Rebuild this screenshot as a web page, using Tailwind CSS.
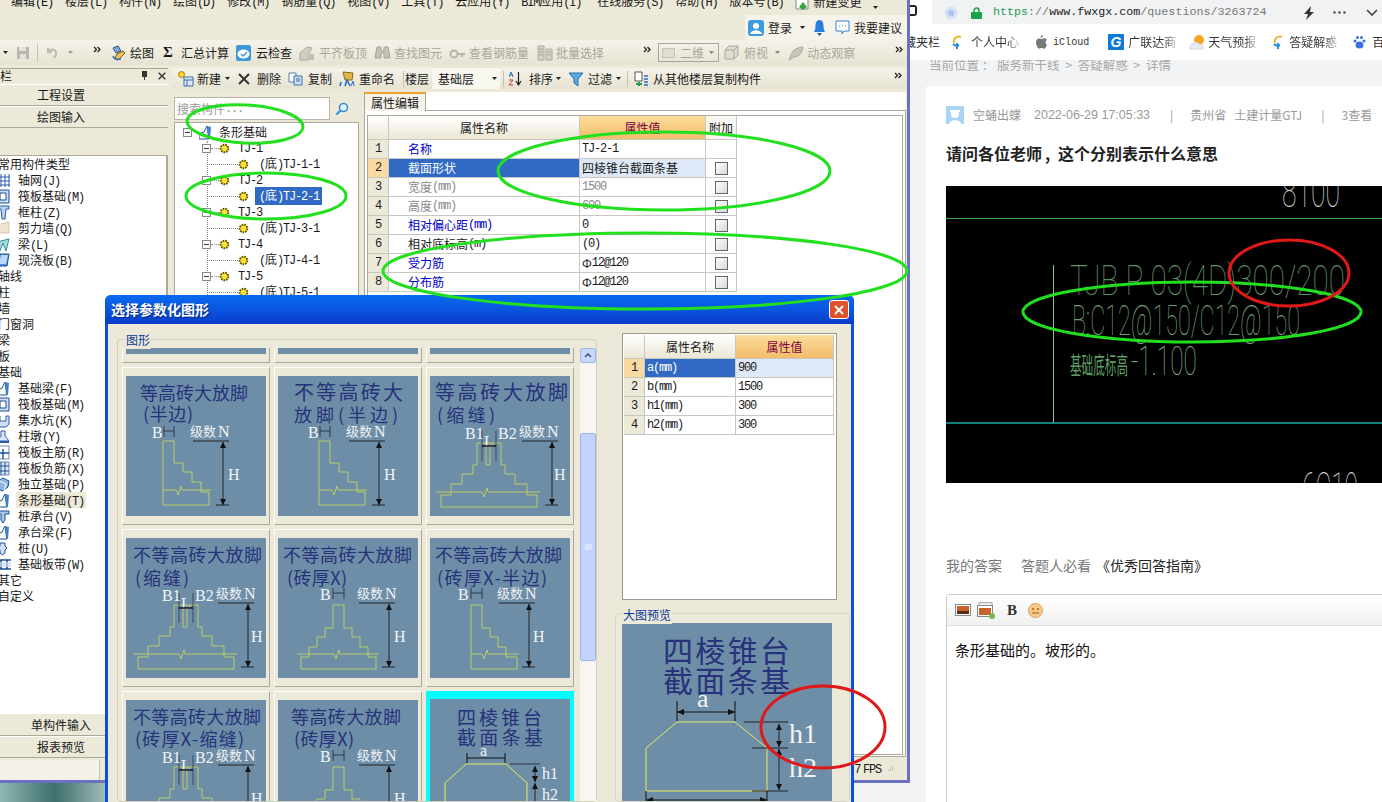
<!DOCTYPE html>
<html lang="zh">
<head>
<meta charset="UTF-8">
<title>GTJ</title>
<script src="https://cdn.jsdelivr.net/npm/@tailwindcss/browser@4"></script>
</head>
<body class="bg-[#f2f3f5]">

<!-- icon sheet -->
<svg class="hidden">
  <symbol id="more" viewBox="0 0 8 7"><path d="M1 1l2.5 2.5L1 6M4.5 1L7 3.5 4.5 6" fill="none" stroke="#222" stroke-width="1.3"/></symbol>
  <symbol id="down" viewBox="0 0 5 3"><path d="M0 0h5L2.5 3z" fill="#222"/></symbol>
  <symbol id="gear" viewBox="0 0 11 11"><circle cx="5.5" cy="5.5" r="3.8" fill="#ffe23a" stroke="#5c5200" stroke-width="2" stroke-dasharray="1.6 1"/></symbol>
  <symbol id="save" viewBox="0 0 14 14"><path d="M1 1h12v12H1z" fill="#b8b8b0"/><path d="M3 1h7v4H3zM4 8h6v5H4z" fill="#e4e2d8"/></symbol>
  <symbol id="undo" viewBox="0 0 12 12"><path d="M2 5c3-4 9-3 8 3l-2 3M2 1v4h4" fill="none" stroke="#bdbbb0" stroke-width="2"/></symbol>
  <symbol id="draw" viewBox="0 0 15 16"><path d="M2 3l5-2 3 5-5 2z" fill="#7fa6d8" stroke="#2d4f8a"/><path d="M6 9l6-3 2 2-7 7-3-2z" fill="#f2c14e" stroke="#7a5a10"/><path d="M2 11c1 3 4 4 8 3" fill="none" stroke="#2d6fc0" stroke-width="1.5"/></symbol>
  <symbol id="cloud" viewBox="0 0 15 16"><rect width="15" height="16" rx="2" fill="#3d97dc"/><ellipse cx="7.5" cy="9" rx="6" ry="4.5" fill="#fff"/><path d="M5 9l2 2 4-4" fill="none" stroke="#3d97dc" stroke-width="1.5"/></symbol>
  <symbol id="dis1" viewBox="0 0 16 16"><path d="M1 15V8l7-6 5 1-3 5v7z" fill="#d0cec2" stroke="#aaa89c"/><path d="M11 9h4v6h-4z" fill="#c0beb2"/></symbol>
  <symbol id="binoc" viewBox="0 0 17 16"><path d="M3 2h4v4h3V2h4l2 11h-6V8H7v5H1z" fill="#c4c2b6" stroke="#a6a498"/></symbol>
  <symbol id="dis2" viewBox="0 0 16 16"><circle cx="5" cy="9" r="3.5" fill="none" stroke="#b8b6aa" stroke-width="2"/><path d="M8 9h8M13 9v3" stroke="#b8b6aa" stroke-width="2"/></symbol>
  <symbol id="dis3" viewBox="0 0 16 16"><path d="M1 1h6v14H1zM9 4h6v11H9z" fill="#d4d2c6" stroke="#b0aea2"/><path d="M2 4h4M2 7h4M2 10h4M10 7h4M10 10h4" stroke="#a6a498"/></symbol>
  <symbol id="cube" viewBox="0 0 15 15"><path d="M1 5l4-4h9v9l-4 4H1zM1 5h9v9M10 5l4-4" fill="#dedcd0" stroke="#aaa89c"/></symbol>
  <symbol id="orbit" viewBox="0 0 16 16"><path d="M1 15l5-3c5 0 9-5 9-10C10 2 4 5 3 10z" fill="#c8c6ba" stroke="#aeac9f"/></symbol>
  <symbol id="newi" viewBox="0 0 16 16"><circle cx="3.5" cy="3.5" r="3" fill="#ffd23a" stroke="#a77f00"/><path d="M6 6h9v9H6z" fill="#dce8f8" stroke="#3a6ea5"/><path d="M6 9h9M9 9v6" stroke="#3a6ea5"/></symbol>
  <symbol id="cross" viewBox="0 0 12 12"><path d="M1 1l10 10M11 1L1 11" stroke="#333" stroke-width="2"/></symbol>
  <symbol id="copy" viewBox="0 0 15 14"><path d="M1 1h7v9H1z" fill="#fff" stroke="#5a7fb0"/><path d="M6 4h8v9H6z" fill="#cfe0f6" stroke="#3a6ea5"/><path d="M8 7h4M8 9h4" stroke="#3a6ea5"/></symbol>
  <symbol id="rename" viewBox="0 0 16 16"><path d="M4 1l10 1-1 7H6z" fill="#e3b64a" stroke="#8a6a1a"/><path d="M1 15l1-4M6 15l2-6 3 6" fill="none" stroke="#2d6fc0" stroke-width="1.6"/><path d="M12 15l2-5 1 5" fill="none" stroke="#2d6fc0"/></symbol>
  <symbol id="sort" viewBox="0 0 13 15"><path d="M0 6l2-5 2 5M1 4h3" fill="none" stroke="#2d6fc0"/><path d="M0 9h4l-4 5h4" fill="none" stroke="#c0392b"/><path d="M9.500 1v12M7 10l2.500 4 2.500-4" fill="none" stroke="#222" stroke-width="1.2"/></symbol>
  <symbol id="funnel" viewBox="0 0 14 14"><path d="M0 1h14L9 7v7l-4-3V7z" fill="#5aa8e0" stroke="#2d6fa8"/></symbol>
  <symbol id="floors" viewBox="0 0 16 16"><path d="M2 1h7v9H2z" fill="#fff" stroke="#555"/><path d="M11 5h4M11 8h4M11 11h4M11 14h4" stroke="#2d6fc0" stroke-width="1.5"/><path d="M3 13h6M6 11v4" stroke="#2a9a4a" stroke-width="2"/></symbol>
  <symbol id="user" viewBox="0 0 16 16"><rect width="16" height="16" rx="3" fill="#3a9be0"/><circle cx="8" cy="6" r="3" fill="#fff"/><path d="M2 14c1-5 11-5 12 0z" fill="#fff"/></symbol>
  <symbol id="bell" viewBox="0 0 11 16"><path d="M5.500 0c3 0 4 3 4 6s1 5 1.500 6H0c.5-1 1.500-3 1.500-6s1-6 4-6z" fill="#2a7de0"/><path d="M3 13h5l-2.500 3z" fill="#1a5ab0"/></symbol>
  <symbol id="chat" viewBox="0 0 15 16"><path d="M1 1h13v10H9l-2 3v-3H1z" fill="#fff" stroke="#3a7fd0"/><path d="M4 6h1M7 6h1M10 6h1" stroke="#3a7fd0"/></symbol>
  <symbol id="change" viewBox="0 0 15 15"><path d="M1 1h9l3 3v10H1z" fill="#fff" stroke="#7a8a9a"/><path d="M4 12l4-5 4 5-4 3z" fill="#3aa53a"/></symbol>
  <!-- left list -->
  <symbol id="l-grid" viewBox="0 0 15 15"><path d="M0 4h13M0 8h13M0 12h13M4 1v13M8 1v13M12 1v13" stroke="#2b5ea8"/></symbol>
  <symbol id="l-raft" viewBox="0 0 15 15"><path d="M0 1h12v13H0z" fill="#cfe0f6" stroke="#1d4f96"/><path d="M3 4h6v7H3z" fill="#fff" stroke="#1d4f96"/></symbol>
  <symbol id="l-col" viewBox="0 0 15 15"><path d="M0 1h12v3H9l-1 10H5L4 4H0z" fill="#b9d2ee" stroke="#2b5ea8"/></symbol>
  <symbol id="l-wall" viewBox="0 0 15 15"><path d="M0 4l12-3v11H0z" fill="#efe4d0" stroke="#b89a6a" stroke-dasharray="1 1"/></symbol>
  <symbol id="l-beam" viewBox="0 0 15 15"><path d="M0 5l12-3-3 12-3-8-3 8z" fill="#a8dcdc" stroke="#2f8a9a"/></symbol>
  <symbol id="l-slab" viewBox="0 0 15 15"><path d="M3 1h9l-2 12H0z" fill="#4a90d8" stroke="#1d4f96"/><path d="M4 2h7l-2 9H2z" fill="#bcd8f4"/></symbol>
  <symbol id="l-strip" viewBox="0 0 15 15"><path d="M0 14V9l5-2 3-6 2 13z" fill="#fff" stroke="#1d4f96"/><path d="M8 1l4 1-1 12h-2z" fill="#3f7fd0"/></symbol>
  <symbol id="l-pit" viewBox="0 0 15 15"><path d="M0 3h3v5h6V3h3v8l-3 3H2z" fill="#cfe0f6" stroke="#2b5ea8"/></symbol>
  <symbol id="l-pier" viewBox="0 0 15 15"><path d="M4 2h4v5l4 5H0l4-5z" fill="#dce8f6" stroke="#2b5ea8"/><path d="M0 13h12" stroke="#2b5ea8" stroke-width="2"/></symbol>
  <symbol id="l-rebar" viewBox="0 0 15 15"><path d="M0 1h12v13H0z" fill="#fff" stroke="#6a8cb8"/><path d="M0 8h12M6 4v10" stroke="#1d4f96" stroke-width="1.4"/></symbol>
  <symbol id="l-rebar2" viewBox="0 0 15 15"><path d="M0 1h12v13H0z" fill="#dce8f6" stroke="#6a8cb8"/><path d="M0 5h12M0 10h12M4 1v13M8 1v13" stroke="#1d4f96"/></symbol>
  <symbol id="l-iso" viewBox="0 0 15 15"><path d="M0 5l6-4 6 3-1 6-6 4-5-3z" fill="#8fb6e4" stroke="#1d4f96"/><path d="M3 4l6 3-2 6" fill="none" stroke="#fff"/></symbol>
  <symbol id="l-cap" viewBox="0 0 15 15"><path d="M0 2h12v3H8v6l-2 3-2-3V5H0z" fill="#a8c8ec" stroke="#1d4f96"/></symbol>
  <symbol id="l-pile" viewBox="0 0 15 15"><path d="M3 2h5v3l2 2-2 2v3l-2.500 2L3 12V9L1 7l2-2z" fill="#cfe0f6" stroke="#1d4f96"/></symbol>
  <symbol id="l-band" viewBox="0 0 15 15"><path d="M0 3h14M0 12h14M4 3v9M10 3v9" stroke="#1d4f96" stroke-width="1.6"/><path d="M0 5h14v5H0z" fill="#cfe0f6" opacity=".7"/></symbol>
</svg>

<div class="relative w-[1382px] h-[802px] overflow-hidden bg-[#f2f3f5] font-['Noto_Sans_CJK_SC',sans-serif] text-[12px] text-[#1a1a1a]">

  <!-- desktop wallpaper showing below the app window -->
  <div class="absolute left-0 top-[783px] w-[110px] h-[19px] bg-linear-to-r from-[#8fb8b4] via-[#3f6f6c] to-[#a8c4c0]"></div>

  <!-- GTJ app window -->
  <div id="app" class="absolute left-0 top-0 w-[910px] h-[783px] flex flex-col bg-[#ece9d8] border-r-[3px] border-b-[3px] border-[#6a72c0]">
    <!-- menu -->
    <div class="h-[14px] flex items-center overflow-hidden pl-[11px] gap-[12px] whitespace-nowrap">
      <span class="-mt-[10px]">编辑(E)</span><span class="-mt-[10px]">楼层(L)</span><span class="-mt-[10px]">构件(N)</span><span class="-mt-[10px]">绘图(D)</span><span class="-mt-[10px]">修改(M)</span><span class="-mt-[10px]">钢筋量(Q)</span><span class="-mt-[10px]">视图(V)</span><span class="-mt-[10px]">工具(T)</span><span class="-mt-[10px]">云应用(Y)</span><span class="-mt-[10px]">BIM应用(I)</span><span class="-mt-[10px] ml-[4px]">在线服务(S)</span><span class="-mt-[10px]">帮助(H)</span><span class="-mt-[10px]">版本号(B)</span>
      <svg class="w-[15px] h-[15px] -mt-[10px]"><use href="#change"/></svg>
      <span class="-mt-[10px] -ml-[9px]">新建变更</span>
      <svg class="w-[5px] h-[3px]"><use href="#down"/></svg>
    </div>
    <!-- login row -->
    <div class="h-[26px] flex justify-end">
      <div class="w-[162px] h-[25px] mt-px bg-[#f6f4ea] rounded-l-[3px] flex items-center">
        <svg class="w-[16px] h-[16px] ml-[3px]"><use href="#user"/></svg>
        <span class="ml-[4px]">登录</span>
        <svg class="w-[5px] h-[3px] ml-[8px]"><use href="#down"/></svg>
        <svg class="w-[11px] h-[16px] ml-[9px]"><use href="#bell"/></svg>
        <svg class="w-[15px] h-[16px] ml-[10px]"><use href="#chat"/></svg>
        <span class="ml-[4px]">我要建议</span>
      </div>
    </div>
    <!-- main toolbar -->
    <div class="h-[25px] flex items-center bg-linear-to-b from-[#f5f3e9] to-[#e6e3d2] whitespace-nowrap">
      <svg class="w-[5px] h-[3px] ml-[3px]"><use href="#down"/></svg>
      <svg class="w-[14px] h-[14px] ml-[8px]"><use href="#save"/></svg>
      <span class="w-px h-[18px] bg-[#c4c2b4] ml-[7px]"></span>
      <svg class="w-[12px] h-[12px] ml-[8px]"><use href="#undo"/></svg>
      <svg class="w-[5px] h-[3px] ml-[10px] opacity-40"><use href="#down"/></svg>
      <svg class="w-[8px] h-[7px] ml-[20px] -mt-[6px]"><use href="#more"/></svg>
      <svg class="w-[15px] h-[16px] ml-[10px]"><use href="#draw"/></svg>
      <span class="ml-[4px]">绘图</span>
      <span class="ml-[9px] w-[10px] text-[15px] font-bold leading-none font-['Liberation_Serif',serif]">Σ</span>
      <span class="ml-[8px]">汇总计算</span>
      <svg class="w-[15px] h-[16px] ml-[7px]"><use href="#cloud"/></svg>
      <span class="ml-[5px]">云检查</span>
      <svg class="w-[16px] h-[16px] ml-[7px]"><use href="#dis1"/></svg>
      <span class="ml-[4px] text-[#a8a69a]">平齐板顶</span>
      <svg class="w-[17px] h-[16px] ml-[7px]"><use href="#binoc"/></svg>
      <span class="ml-[3px] text-[#a8a69a]">查找图元</span>
      <svg class="w-[16px] h-[16px] ml-[7px]"><use href="#dis2"/></svg>
      <span class="ml-[4px] text-[#a8a69a]">查看钢筋量</span>
      <svg class="w-[16px] h-[16px] ml-[8px]"><use href="#dis3"/></svg>
      <span class="ml-[3px] text-[#a8a69a]">批量选择</span>
      <svg class="w-[8px] h-[7px] ml-[39px] -mt-[6px]"><use href="#more"/></svg>
      <div class="ml-[7px] w-[61px] h-[19px] border border-[#a8a69a] flex items-center text-[#a8a69a]">
        <span class="w-[13px] h-[10px] ml-[3px] border border-[#c4c2b4] bg-[#e0ded2]"></span>
        <span class="ml-[5px]">二维</span>
        <svg class="w-[5px] h-[3px] ml-[5px] opacity-50"><use href="#down"/></svg>
      </div>
      <svg class="w-[15px] h-[15px] ml-[5px]"><use href="#cube"/></svg>
      <span class="ml-[5px] text-[#a8a69a]">俯视</span>
      <svg class="w-[5px] h-[3px] ml-[7px] opacity-50"><use href="#down"/></svg>
      <svg class="w-[16px] h-[16px] ml-[8px]"><use href="#orbit"/></svg>
      <span class="ml-[3px] text-[#a8a69a]">动态观察</span>
      <svg class="w-[8px] h-[7px] ml-[40px] -mt-[6px]"><use href="#more"/></svg>
    </div>

    <div class="flex-1 flex pt-[3px] min-h-0">
      <!-- navigation column -->
      <div class="w-[168px] flex flex-col shrink-0">
        <div class="h-[14px] border-t border-[#aca899] flex items-center whitespace-nowrap">
          <span class="w-[141px] overflow-hidden">栏</span>
          <span class="w-[7px] h-[9px] flex flex-col items-center"><span class="w-[5px] h-[6px] bg-[#333]"></span><span class="w-px h-[3px] bg-[#333]"></span></span>
          <svg class="w-[8px] h-[8px] ml-[10px]"><use href="#cross"/></svg>
        </div>
        <div class="h-[22px] mt-[2px] flex items-center pl-[37px] border-t border-white border-b border-b-[#aca899] text-[12px]">工程设置</div>
        <div class="h-[22px] flex items-center pl-[37px] border-t border-white border-b border-b-[#aca899]">绘图输入</div>
        <div class="h-[27px]"></div>
        <div id="nav" class="flex-1 min-h-0 bg-white border-t border-r-2 border-[#aca899] overflow-hidden"></div>
        <div class="h-[23px] flex items-center pl-[31px] border-t border-white border-b border-b-[#aca899]">单构件输入</div>
        <div class="h-[22px] flex items-center pl-[37px] border-t border-white border-b border-b-[#aca899]">报表预览</div>
        <div class="h-[22px] flex items-end"><div class="w-[100px] h-[20px] bg-[#f4f2e8] border-r border-[#c4c2b4]"></div></div>
      </div>

      <!-- component area -->
      <div class="flex-1 ml-[4px] flex flex-col min-w-0">
        <div class="h-[21px] flex items-center whitespace-nowrap bg-linear-to-b from-[#f5f3e9] to-[#e6e3d2]">
          <svg class="w-[16px] h-[16px] ml-[6px]"><use href="#newi"/></svg>
          <span class="ml-[3px]">新建</span>
          <svg class="w-[5px] h-[3px] ml-[4px]"><use href="#down"/></svg>
          <svg class="w-[12px] h-[12px] ml-[8px]"><use href="#cross"/></svg>
          <span class="ml-[7px]">删除</span>
          <svg class="w-[15px] h-[14px] ml-[7px]"><use href="#copy"/></svg>
          <span class="ml-[5px]">复制</span>
          <svg class="w-[16px] h-[16px] ml-[7px]"><use href="#rename"/></svg>
          <span class="ml-[4px]">重命名</span>
          <span class="w-px h-[16px] bg-[#c4c2b4] ml-[8px]"></span>
          <span class="ml-[1px]">楼层</span>
          <div class="ml-[3px] w-[68px] h-[21px] bg-[#f8f7f0] flex items-center pl-[6px]"><span>基础层</span><svg class="w-[5px] h-[3px] ml-[18px]"><use href="#down"/></svg></div>
          <span class="w-px h-[16px] bg-[#c4c2b4] ml-[3px]"></span>
          <svg class="w-[13px] h-[15px] ml-[5px]"><use href="#sort"/></svg>
          <span class="ml-[7px]">排序</span>
          <svg class="w-[5px] h-[3px] ml-[3px]"><use href="#down"/></svg>
          <svg class="w-[14px] h-[14px] ml-[8px]"><use href="#funnel"/></svg>
          <span class="ml-[5px]">过滤</span>
          <svg class="w-[5px] h-[3px] ml-[4px]"><use href="#down"/></svg>
          <span class="w-px h-[16px] bg-[#c4c2b4] ml-[6px]"></span>
          <svg class="w-[16px] h-[16px] ml-[5px]"><use href="#floors"/></svg>
          <span class="ml-[4px]">从其他楼层复制构件</span>
          <svg class="w-[8px] h-[7px] ml-auto mr-[5px] -mt-[6px]"><use href="#more"/></svg>
        </div>
        <div class="flex-1 flex min-h-0">
          <!-- tree column -->
          <div class="w-[185px] ml-[2px] pt-[8px] flex flex-col shrink-0">
            <div class="h-[23px] flex">
              <div class="w-[156px] bg-white border border-[#b8b6a8] flex items-center pl-[2px] text-[#999]">搜索构件...</div>
              <div class="w-[24px] flex items-center justify-center"><svg class="w-[14px] h-[14px]" viewBox="0 0 14 14"><circle cx="8.500" cy="5.500" r="4" fill="#dff0fb" stroke="#3a8fd0" stroke-width="1.600"/><path d="M5.500 8.500L1.500 12.500" stroke="#3a8fd0" stroke-width="2.200"/></svg></div>
            </div>
            <div id="tree" class="relative flex-1 mt-[2px] bg-white border border-[#aca899] overflow-hidden"></div>
          </div>
          <!-- property editor -->
          <div class="flex-1 ml-[5px] flex flex-col min-w-0 mr-[1px]">
            <div class="h-[3px]"></div>
            <div class="h-[19px] flex bg-white">
              <div class="w-[62px] bg-[#f5f3e9] border-x border-[#aca899] border-t-2 border-t-[#f0a030] flex items-center justify-center">属性编辑</div>
              <div class="flex-1 border-b border-[#aca899]"></div>
            </div>
            <div class="h-[646px] bg-white border-x border-b border-[#aca899] pt-[4px] pl-[2px] pr-[2px]">
              <div id="props" class="border border-[#aca899] h-[640px]"></div>
            </div>
            <div class="flex-1 flex items-center justify-end pr-[12px] gap-[5px]">
              <span>7.7 FPS</span>
              <svg class="w-[8px] h-[8px]" viewBox="0 0 8 8"><path d="M6 1h1M4 3h1M6 3h1M2 5h1M4 5h1M6 5h1" stroke="#aca899"/></svg>
            </div>
          </div>
        </div>
      </div>
    </div>
  </div>

  <!-- dialog -->
  <div id="dialog" class="absolute left-[105px] top-[295px] w-[749px] h-[507px] flex flex-col bg-[#ece9d8] border-x-[3px] border-[#0a4fe0] rounded-t-[6px]">
    <div class="h-[29px] -mx-[3px] rounded-t-[6px] bg-linear-to-b from-[#0a6af0] via-[#0a55e0] to-[#0a3cc8] flex items-center pl-[6px] pr-[5px] shrink-0">
      <span class="text-white font-bold text-[14px] [text-shadow:1px_1px_1px_#0a2a80]">选择参数化图形</span>
      <div class="ml-auto w-[20px] h-[19px] rounded-[3px] bg-[#e0502a] border border-white flex items-center justify-center"><svg class="w-[10px] h-[10px]" viewBox="0 0 10 10"><path d="M1 1l8 8M9 1l-8 8" stroke="#fff" stroke-width="2"/></svg></div>
    </div>
    <div class="flex-1 flex min-h-0 pl-[9px]">
      <!-- shapes group -->
      <div class="relative w-[480px] mt-[15px] border border-[#d0cebc] rounded-[4px] pl-[4px] pt-[8px] overflow-visible">
        <span class="absolute left-[7px] -top-[9px] px-px bg-[#ece9d8] text-[#0a3a9a]">图形</span>
        <div class="flex h-full">
          <div class="w-[456px] h-full overflow-hidden">
            <div id="tiles" class="-mt-[143px] grid grid-cols-[148px_148px_148px] auto-rows-[158px] gap-x-[4px] gap-y-[4px]"></div>
          </div>
          <div class="w-[16px] ml-[2px] flex flex-col bg-[#f7f6f0]">
            <div class="h-[15px] bg-[#c8d8fa] border border-[#9db4e8] rounded-[2px] flex items-center justify-center"><svg class="w-[8px] h-[5px]" viewBox="0 0 8 5"><path d="M1 4l3-3 3 3" fill="none" stroke="#3a4f8a" stroke-width="1.500"/></svg></div>
            <div class="h-[70px]"></div>
            <div class="h-[228px] bg-[#c3d3fd] border border-[#9db4e8] rounded-[2px] flex items-center justify-center"><svg class="w-[7px] h-[7px]" viewBox="0 0 7 7"><path d="M0 1h7M0 3h7M0 5h7" stroke="#eef3ff"/></svg></div>
          </div>
        </div>
      </div>
      <!-- right side -->
      <div class="flex-1 flex flex-col pl-[25px] pr-[1px] min-w-0 min-h-0">
        <div id="params" class="mt-[9px] w-[215px] h-[267px] shrink-0 bg-white border border-[#9a9a90] p-px"></div>
        <div class="relative mt-[13px] -ml-[7px] flex-1 min-h-0 overflow-visible border border-[#d8d6c6] rounded-[4px] pl-[6px] pt-[9px]">
          <span class="absolute left-[6px] -top-[8px] px-px bg-[#ece9d8] text-[#0a3a9a]">大图预览</span>
          <div class="h-full overflow-hidden">
            <svg id="big" class="w-[210px] h-[200px]" viewBox="0 0 210 200" font-family="'Noto Sans CJK SC',sans-serif"></svg>
          </div>
        </div>
      </div>
    </div>
  </div>

  <!-- browser window -->
  <div class="absolute left-[910px] top-0 w-[472px] h-[802px] flex flex-col bg-[#f2f3f5]">
    <div class="h-[24px] bg-white flex shrink-0">
      <div class="w-[7px] h-[11px] mt-[5px] border-2 border-l-0 border-[#222] rounded-r-[3px]"></div>
      <div class="ml-[15px] flex-1 bg-[#f1f2f4] rounded-bl-[4px] flex items-center pt-[1px]">
        <svg class="w-[14px] h-[14px] ml-[12px]" viewBox="0 0 14 14"><circle cx="7" cy="7" r="6.500" fill="#d6e2f8"/><circle cx="7" cy="7" r="3" fill="#a9c2f0"/></svg>
        <svg class="w-[11px] h-[12px] ml-[13px]" viewBox="0 0 11 12"><path d="M3 5V3.500a2.500 2.500 0 015 0V5" fill="none" stroke="#1aa34a" stroke-width="1.500"/><rect y="5" width="11" height="7" rx="1" fill="#1aa34a"/></svg>
        <span class="ml-[11px] font-['Liberation_Mono',monospace] text-[11.7px] whitespace-nowrap text-[#777]"><span class="text-[#1f9a55]">https</span>://<span class="text-[#222]">www.fwxgx.com</span>/questions/3263724</span>
        <svg class="w-[12px] h-[14px] ml-[36px]" viewBox="0 0 12 14"><path d="M8 0L1 8h4l-2 6 8-8H7z" fill="#333"/></svg>
        <svg class="w-[13px] h-[3px] ml-[18px]" viewBox="0 0 13 3"><circle cx="1.500" cy="1.500" r="1.300" fill="#555"/><circle cx="6.500" cy="1.500" r="1.300" fill="#555"/><circle cx="11.500" cy="1.500" r="1.300" fill="#555"/></svg>
        <svg class="w-[12px] h-[7px] ml-[20px]" viewBox="0 0 12 7"><path d="M1 1l5 5 5-5" fill="none" stroke="#444" stroke-width="1.600"/></svg>
      </div>
    </div>
    <div class="relative z-10 h-[36px] bg-white flex items-center whitespace-nowrap overflow-hidden text-[12px] text-[#333] shrink-0 *:shrink-0">
      <span class="-ml-[6px] w-[36px]">藏夹栏</span>
      <svg class="w-[12px] h-[16px] ml-[11px]" viewBox="0 0 12 16"><path d="M10 3A5 5 0 003 9" fill="none" stroke="#f2b632" stroke-width="2"/><path d="M2 10a5 5 0 006 1M6 9v6" fill="none" stroke="#2a8fd8" stroke-width="2"/></svg>
      <span class="ml-[8px] w-[48px] bg-linear-to-r from-[#333] from-75% to-[#ccc] bg-clip-text text-transparent">个人中心</span>
      <svg class="w-[12px] h-[14px] ml-[16px]" viewBox="0 0 12 14"><path d="M8 0c0 2-1 3-2.500 3C5.500 1.500 7 0 8 0zM6 4c1 0 2-.8 3.500-.8 1 0 2 .6 2.500 1.500-2 1.200-1.700 4 .0 5-.7 2-2 4-3 4-.9 0-1.300-.6-2.300-.6s-1.500.6-2.300.6C3 13.700 1 10 1 7.500 1 5 2.600 3.500 4 3.500c.8 0 1.500.5 2 .5z" fill="#777"/></svg>
      <span class="ml-[6px] font-['Liberation_Mono',monospace] text-[10px] tracking-[0.05px] text-[#333]">iCloud</span>
      <svg class="w-[16px] h-[16px] ml-[19px]" viewBox="0 0 16 16"><rect width="16" height="16" rx="1" fill="#0d79d9"/><text x="2.500" y="13" font-size="14" font-weight="bold" font-style="italic" fill="#fff" font-family="'Liberation Sans',sans-serif">G</text></svg>
      <span class="ml-[4px] w-[48px] bg-linear-to-r from-[#333] from-75% to-[#ccc] bg-clip-text text-transparent">广联达商</span>
      <svg class="w-[16px] h-[16px] ml-[13px]" viewBox="0 0 16 16"><circle cx="10" cy="6" r="5" fill="#f6a623"/><path d="M1 15c-1-3 1-5 3-5 1-2 5-2 6 0 2 0 4 2 4 5z" fill="#e8edf2" stroke="#cfd6dc"/></svg>
      <span class="ml-[3px] w-[48px] bg-linear-to-r from-[#333] from-75% to-[#ccc] bg-clip-text text-transparent">天气预报</span>
      <svg class="w-[12px] h-[16px] ml-[16px]" viewBox="0 0 12 16"><path d="M10 3A5 5 0 003 9" fill="none" stroke="#f2b632" stroke-width="2"/><path d="M2 10a5 5 0 006 1M6 9v6" fill="none" stroke="#2a8fd8" stroke-width="2"/></svg>
      <span class="ml-[5px] w-[48px] bg-linear-to-r from-[#333] from-75% to-[#ccc] bg-clip-text text-transparent">答疑解惑</span>
      <svg class="w-[13px] h-[14px] ml-[16px]" viewBox="0 0 13 14"><ellipse cx="6.500" cy="10" rx="4" ry="3.500" fill="#3a6fe0"/><circle cx="2" cy="6" r="1.500" fill="#3a6fe0"/><circle cx="11" cy="6" r="1.500" fill="#3a6fe0"/><circle cx="4.500" cy="2.500" r="1.500" fill="#3a6fe0"/><circle cx="8.500" cy="2.500" r="1.500" fill="#3a6fe0"/></svg>
      <span class="ml-[6px]">百度</span>
    </div>
    <div class="flex-1 pl-[16px] min-h-0 overflow-hidden">
      <div class="h-[27px] -mt-[2px] mb-[1px] pl-[3px] text-[12.500px] leading-[14px] text-[#a8a8a8] whitespace-nowrap">当前位置 ： 服务新干线&nbsp; &gt; &nbsp;答疑解惑&nbsp; &gt; &nbsp;详情</div>
      <div class="bg-white h-[720px] pl-[20px] pt-[20px] overflow-hidden rounded-tl-[2px]">
        <div class="h-[18px] flex items-center text-[#999] whitespace-nowrap text-[12px]">
          <svg class="w-[18px] h-[18px]" viewBox="0 0 18 18"><rect width="18" height="18" fill="#a8d4f5"/><circle cx="9" cy="8" r="4" fill="#fff"/><path d="M3 18c0-5 12-5 12 0z" fill="#fff"/><path d="M4 4h10v2H4z" fill="#fff"/></svg>
          <span class="ml-[9px] w-[48px]">空蛹出蝶</span>
          <span class="ml-[13px] font-['Liberation_Sans',sans-serif] text-[12.500px]">2022-06-29 17:05:33</span>
          <span class="ml-[20px]">|</span>
          <span class="ml-[17px]">贵州省</span>
          <span class="ml-[8px]">土建计量GTJ</span>
          <span class="ml-[19px]">|</span>
          <span class="ml-[17px]">3查看</span>
        </div>
        <h1 class="mt-[17px] h-[24px] leading-[24px] text-[16px] font-bold text-[#222] whitespace-nowrap">请问各位老师<span class="inline-block w-[16px] pl-[3px]">,</span>这个分别表示什么意思</h1>
        <!-- CAD drawing -->
        <svg class="mt-[21px] w-[436px] h-[297px] bg-black" viewBox="946 186 436 297" font-family="Roboto,'Liberation Sans',sans-serif" font-weight="100">
          <path d="M946 218.500H1382" stroke="#38b050"/>
          <path d="M946 423H1382" stroke="#0f7f7f" stroke-width="2"/>
          <path d="M1053.500 265V423" stroke="#8fc09a"/>
          <text x="1282" y="207" font-size="44" textLength="58" lengthAdjust="spacingAndGlyphs" fill="#cfcfcf">8100</text>
          <text x="1070" y="295" font-size="42" textLength="275" lengthAdjust="spacingAndGlyphs" fill="#5f8f66">TJB P 03(4D)300/200</text>
          <text x="1072" y="335" font-size="42" textLength="228" lengthAdjust="spacingAndGlyphs" fill="#6f9f74">B:C12@150/C12@150</text>
          <text x="1070" y="374" font-size="24" textLength="58" lengthAdjust="spacingAndGlyphs" font-family="'Noto Sans CJK SC',sans-serif" font-weight="400" fill="#5f9f66">基础底标高</text>
          <text x="1131" y="375" font-size="40" textLength="66" lengthAdjust="spacingAndGlyphs" fill="#7fb088">-1.100</text>
          <text x="1302" y="504" font-size="44" textLength="56" lengthAdjust="spacingAndGlyphs" fill="#cfcfcf">6C10</text>
        </svg>
        <div class="mt-[72px] h-[20px] flex items-center text-[14px] text-[#777] whitespace-nowrap">
          <span>我的答案</span>
          <span class="ml-[19px]">答题人必看</span>
          <span class="ml-[5px] text-[#222]">《优秀回答指南》</span>
        </div>
        <div class="mt-[19px] w-[460px] h-[240px] border border-[#ccc] rounded-t-[3px]">
          <div class="h-[31px] bg-linear-to-b from-white to-[#f0f0f0] border-b border-[#ddd] flex items-center">
            <svg class="w-[16px] h-[12px] ml-[8px]" viewBox="0 0 16 12"><rect x=".5" y=".5" width="15" height="11" fill="#fff" stroke="#888"/><rect x="2" y="2" width="12" height="8" fill="#c8642a"/><path d="M2 7h12v3H2z" fill="#5a2a10"/></svg>
            <svg class="w-[18px] h-[17px] ml-[6px]" viewBox="0 0 18 17"><rect x="2" y=".5" width="13" height="9" fill="#eee" stroke="#aaa"/><rect x=".5" y="3.500" width="15" height="11" fill="#fff" stroke="#888"/><rect x="2" y="6" width="12" height="7" fill="#c8642a"/><circle cx="15" cy="14" r="3" fill="#7ab648"/></svg>
            <span class="ml-[12px] w-[14px] font-bold text-[15px] font-['Liberation_Serif',serif] text-[#333]">B</span>
            <svg class="w-[15px] h-[15px] ml-[7px]" viewBox="0 0 15 15"><circle cx="7.500" cy="7.500" r="7" fill="#f6c98a" stroke="#e0a050"/><circle cx="5" cy="6" r="1" fill="#a05a10"/><circle cx="10" cy="6" r="1" fill="#a05a10"/><path d="M4 10h7" stroke="#a05a10"/></svg>
          </div>
          <div class="pl-[8px] pt-[14px] text-[15px] leading-[20px] text-[#111]">条形基础的。坡形的。</div>
        </div>
      </div>
    </div>
  </div>

  <!-- hand drawn annotations -->
  <svg class="absolute inset-0 w-[1382px] h-[802px] pointer-events-none" viewBox="0 0 1382 802" fill="none" stroke-width="3">
    <ellipse cx="245" cy="124" rx="58" ry="19" stroke="#22e01e" transform="rotate(3 245 124)"/>
    <ellipse cx="266" cy="196" rx="80" ry="23" stroke="#22e01e"/>
    <ellipse cx="664" cy="171" rx="166" ry="39" stroke="#22e01e"/>
    <ellipse cx="645" cy="271" rx="262" ry="38" stroke="#22e01e"/>
    <ellipse cx="823" cy="727" rx="62" ry="41" stroke="#e01818"/>
    <ellipse cx="1192" cy="312" rx="169" ry="30" stroke="#22e01e"/>
    <ellipse cx="1289" cy="273" rx="60" ry="33" stroke="#e01818"/>
  </svg>
</div>

<script>
  // left navigation list
  const navItems = [
    ['常用构件类型'],['轴网(J)','l-grid'],['筏板基础(M)','l-raft'],['框柱(Z)','l-col'],['剪力墙(Q)','l-wall'],['梁(L)','l-beam'],['现浇板(B)','l-slab'],
    ['轴线'],['柱'],['墙'],['门窗洞'],['梁'],['板'],['基础'],
    ['基础梁(F)','l-strip'],['筏板基础(M)','l-raft'],['集水坑(K)','l-pit'],['柱墩(Y)','l-pier'],['筏板主筋(R)','l-rebar'],['筏板负筋(X)','l-rebar2'],['独立基础(P)','l-iso'],['条形基础(T)','l-strip'],['桩承台(V)','l-cap'],['承台梁(F)','l-strip'],['桩(U)','l-pile'],['基础板带(W)','l-band'],
    ['其它'],['自定义']
  ];
  document.getElementById('nav').innerHTML = navItems.map(([t, icon]) => {
    if (!icon) return `<div class="h-[16px] flex items-center -ml-[2px] whitespace-nowrap">${t}</div>`;
    const sel = t.startsWith('条形') ? 'bg-[#ece9d8]' : '';
    return `<div class="h-[16px] flex items-center whitespace-nowrap"><svg class="w-[15px] h-[15px] -ml-[3px] shrink-0"><use href="#${icon}"/></svg><span class="ml-[4px] pl-[2px] w-[70px] h-[16px] leading-[16px] ${sel}">${t}</span></div>`;
  }).join('');

  // component tree
  const minus = `<span class="w-[9px] h-[9px] border border-[#888] bg-white flex items-center justify-center shrink-0"><span class="w-[5px] h-px bg-[#333]"></span></span>`;
  const gear = `<svg class="w-[11px] h-[11px] shrink-0"><use href="#gear"/></svg>`;
  let tree = `<div class="absolute left-[32px] top-[18px] h-[200px] border-l border-dotted border-[#888]"></div>
    <div class="relative h-[16px] mt-[1px] flex items-center"><span class="ml-[8px]">${minus}</span><svg class="w-[15px] h-[15px] ml-[7px]"><use href="#l-strip"/></svg><span class="ml-[5px]">条形基础</span></div>`;
  [1,2,3,4,5].forEach(n => {
    const sel = n === 2 ? 'bg-[#316ac5] text-white' : '';
    tree += `<div class="relative h-[16px] flex items-center"><span class="ml-[27px]">${minus}</span><span class="w-[8px] border-t border-dotted border-[#888]"></span>${gear}<span class="ml-[8px]">TJ-${n}</span></div>
      <div class="relative h-[16px] flex items-center"><span class="ml-[32px] w-[31px] border-t border-dotted border-[#888]"></span>${gear}<span class="ml-[6px] pl-[4px] w-[67px] leading-[16px] whitespace-nowrap ${sel}">(底)TJ-${n}-1</span></div>`;
  });
  document.getElementById('tree').innerHTML = tree;

  // property table
  const cell = 'flex items-center border-r border-b border-[#c8c8c0] overflow-hidden whitespace-nowrap';
  const head = (a, b, c) => `<div class="flex h-[24px]">
      <div class="w-[21px] ${cell} bg-linear-to-b from-white to-[#ebe7d4]"></div>
      <div class="${a} ${cell} justify-center bg-linear-to-b from-white to-[#ebe7d4]">属性名称</div>
      <div class="${b} ${cell} justify-center bg-linear-to-b from-[#fbdc9c] to-[#f3bd6a] text-[#800040]">属性值</div>
      ${c}
    </div>`;
  const check = `<span class="w-[13px] h-[13px] border border-[#666] bg-linear-to-br from-white to-[#d8d8d8]"></span>`;
  const props = [
    ['名称','TJ-2-1','text-[#0000c8]',false],['截面形状','四棱锥台截面条基','',true],['宽度(mm)','1500','text-[#8a8a8a]',true],['高度(mm)','600','text-[#8a8a8a]',true],
    ['相对偏心距(mm)','0','text-[#0000c8]',true],['相对底标高(m)','(0)','',true],['受力筋','Ф12@120','text-[#0000c8]',true],['分布筋','Ф12@120','text-[#0000c8]',true]
  ];
  document.getElementById('props').innerHTML = head('w-[191px]','w-[126px]',`<div class="w-[31px] ${cell} justify-center bg-[#f7f6f0]">附加</div>`) +
    props.map(([name, val, color, box], i) => {
      const on = i === 1;
      return `<div class="flex h-[19px]">
        <div class="w-[21px] ${cell} justify-center ${on ? 'bg-[#fbd9a3]' : 'bg-[#ece9d8]'}">${i + 1}</div>
        <div class="w-[191px] ${cell} pl-[19px] ${on ? 'bg-[#316ac5] text-white' : color}">${name}</div>
        <div class="w-[126px] ${cell} pl-[2px] ${on ? 'bg-[#dfe8f6]' : ''} ${i === 2 || i === 3 ? 'text-[#8a8a8a]' : ''}">${val}</div>
        <div class="w-[31px] ${cell} justify-center">${box ? check : ''}</div>
      </div>`;
    }).join('');

  // parameter table in the dialog
  const params = [['a(mm)','900'],['b(mm)','1500'],['h1(mm)','300'],['h2(mm)','300']];
  document.getElementById('params').innerHTML = head('w-[91px]','w-[98px]','') +
    params.map(([name, val], i) => {
      const on = i === 0;
      return `<div class="flex h-[19px]">
        <div class="w-[21px] ${cell} justify-center ${on ? 'bg-[#fbd9a3]' : 'bg-[#ece9d8]'}">${i + 1}</div>
        <div class="w-[91px] ${cell} pl-[2px] ${on ? 'bg-[#316ac5] text-white' : ''}">${name}</div>
        <div class="w-[98px] ${cell} pl-[2px] ${on ? 'bg-[#dfe8f6]' : ''}">${val}</div>
      </div>`;
    }).join('');

  // parametric shape tiles
  const ink = '#27327a', shape = '#b9cc66', serif = `font-family="'Liberation Serif',serif" fill="#f2f4f6"`;
  const title = (s, x, y, len, size = 18) => `<text x="${x}" y="${y}" font-size="${size}" textLength="${len}" fill="${ink}">${s}</text>`;
  const label = (s, x, y, size = 16) => `<text x="${x}" y="${y}" font-size="${size}" ${serif}>${s}</text>`;
  const cjkLabel = (x, y) => `<text x="${x}" y="${y}" font-size="13" fill="#eef1f3" textLength="26">级数</text>`;
  const varrow = (x, a, b) => `<path d="M${x} ${a}V${b}" stroke="#222"/><path d="M${x} ${a}l-3 6h6zM${x} ${b}l-3-6h6z" fill="#111"/>`;
  const brk = (x1, x2, m, y) => `<path d="M${x1} ${y}H${m}l2 5 3-9 1 4H${x2}" fill="none" stroke="${shape}"/>`;
  const ticks = (a, b) => `<path d="M${a} 50V61M${b} 50V61M${a} 55H${b}" stroke="#2a3a4a" fill="none"/>`;
  const levels = (x, arrow, hx) => cjkLabel(x, 60) + label('N', x + 28, 61) + `<path d="M${arrow - 30} 65H${arrow + 6}M${arrow - 7} 129H${arrow + 6}" stroke="#222"/>` + varrow(arrow, 66, 129) + label('H', hx, 104);

  const half = d => `<g transform="translate(${d} 0)"><path d="M37 65H48V87H57V96H66V106H75V116H83V129H37Z" fill="none" stroke="${shape}"/>${brk(37, 85, 50, 114)}</g>` +
    label('B', 26 + d, 62) + ticks(38 + d, 48 + d) + levels(64 + d, 97 + d, 102 + d);
  const slot = d => `<g transform="translate(${d} 0)"><path d="M47 67V89H43V98H32V108H21V119H11V131H107V119H97V108H85V98H75V89H71V67Z" fill="none" stroke="${shape}"/><path d="M56 67V89H60V67" fill="none" stroke="${shape}"/><path d="M52 55V85M66 55V85" stroke="#3a4a5a"/>${brk(6, 110, 52, 116)}</g>` +
    label('B1', 35 + d, 63) + label('B2', 68 + d, 63) + label('L', 54 + d, 71) + `<path d="M${52 + d} 70H${66 + d}" stroke="#111" stroke-width="1.500"/>` + levels(89 + d, 122, 124 + d);
  const thick = () => `<path d="M55 67V90H47V99H39V109H31V119H23V131H98V119H90V109H82V99H74V90H66V67Z" fill="none" stroke="${shape}"/>${brk(19, 101, 56, 116)}` +
    label('B', 42, 62) + ticks(55, 66) + levels(79, 111, 116);
  const halfX = () => `<path d="M41 67H52V90H60V99H68V109H76V119H87V131H41Z" fill="none" stroke="${shape}"/>${brk(41, 89, 52, 116)}` +
    label('B', 28, 62) + ticks(41, 52) + levels(67, 99, 103);

  const taperTile = `${title('四棱锥台', 27, 26, 85, 19)}${title('截面条基', 27, 46, 86, 19)}<text x="50" y="57" font-size="16" ${serif}>a</text>
    <path d="M37 54V64M75 54V64M37 59H75" stroke="#111"/><path d="M36 65H76L97 84V125H15V84Z" fill="none" stroke="#e6e85a"/><path d="M80 65H110" stroke="#334"/>${varrow(105, 67, 83)}${varrow(105, 84, 120)}${label('h1', 112, 80)}${label('h2', 112, 101)}`;

  const tiles = [
    '', '', '',
    title('等高砖大放脚', 14, 24, 108) + title('(半边)', 17, 45, 50) + half(0),
    title('不等高砖大', 16, 24, 109, 20) + title('放脚(半边)', 16, 46, 104) + half(4),
    title('等高砖大放脚', 5, 24, 133, 20) + title('(缩缝)', 7, 46, 58) + slot(0),
    title('不等高砖大放脚', 7, 24, 129) + title('(缩缝)', 9, 47, 54) + slot(1),
    title('不等高砖大放脚', 5, 24, 129) + title('(砖厚X)', 9, 47, 60) + thick(),
    title('不等高砖大放脚', 5, 24, 127) + title('(砖厚X-半边)', 7, 47, 110) + halfX(),
    title('不等高砖大放脚', 7, 24, 128) + title('(砖厚X-缩缝)', 9, 46, 109) + slot(1),
    title('等高砖大放脚', 13, 24, 110) + title('(砖厚X)', 16, 46, 60) + thick(),
    taperTile
  ];
  document.getElementById('tiles').innerHTML = tiles.map((art, i) => {
    const frame = i === tiles.length - 1 ? 'bg-[#00ffff] pt-[8px] px-[4px] -mt-0' : 'border-t border-l border-white border-r border-b border-r-[#aca899] border-b-[#aca899] pt-[8px] px-[3px]';
    return `<div class="${frame} h-[158px] overflow-hidden"><svg class="w-[140px] h-[140px] bg-[#6e8ea8]" viewBox="0 0 140 140" font-family="'Noto Sans CJK SC',sans-serif">${art}</svg></div>`;
  }).join('');

  // big preview
  document.getElementById('big').innerHTML = `<rect width="210" height="200" fill="#6e8ea8"/>
    <text x="41" y="39" font-size="30" textLength="127" fill="${ink}">四棱锥台</text>
    <text x="41" y="69" font-size="30" textLength="127" fill="${ink}">截面条基</text>
    <text x="75" y="84" font-size="26" ${serif}>a</text>
    <path d="M55 78V98M113 78V98M55 89H113" stroke="#111"/><path d="M55 89l7-3v6zM113 89l-7-3v6z" fill="#111"/>
    <path d="M55 99H113L145 125V168H24V125Z" fill="none" stroke="#e6e85a"/>
    <path d="M122 99H166M130 125H166M130 168H166" stroke="#222"/>
    ${varrow(157, 101, 124)}${varrow(157, 126, 167)}
    <text x="167" y="120" font-size="28" ${serif}>h1</text><text x="167" y="154" font-size="28" ${serif}>h2</text>
    <path d="M24 168V182M145 168V182M24 177H145" stroke="#111"/><path d="M24 177l7-3v6zM145 177l-7-3v6z" fill="#111"/>`;

  // old Windows UI font: ascii runs are narrow, half the width of the Chinese glyphs
  function wrapAscii(root) {
    const walker = document.createTreeWalker(root, NodeFilter.SHOW_TEXT);
    const nodes = [];
    while (walker.nextNode()) nodes.push(walker.currentNode);
    nodes.forEach(node => {
      if (node.parentElement.closest('svg') || !/[!-~]/.test(node.textContent)) return;
      const holder = document.createElement('span');
      holder.innerHTML = node.textContent.replace(/[!-~]+/g, m => `<span class="font-['Liberation_Mono',monospace] text-[12px] tracking-[-1.2px]">${m}</span>`);
      node.replaceWith(...holder.childNodes);
    });
  }
  wrapAscii(document.getElementById('app'));
  wrapAscii(document.getElementById('dialog'));
</script>
</body>
</html>
